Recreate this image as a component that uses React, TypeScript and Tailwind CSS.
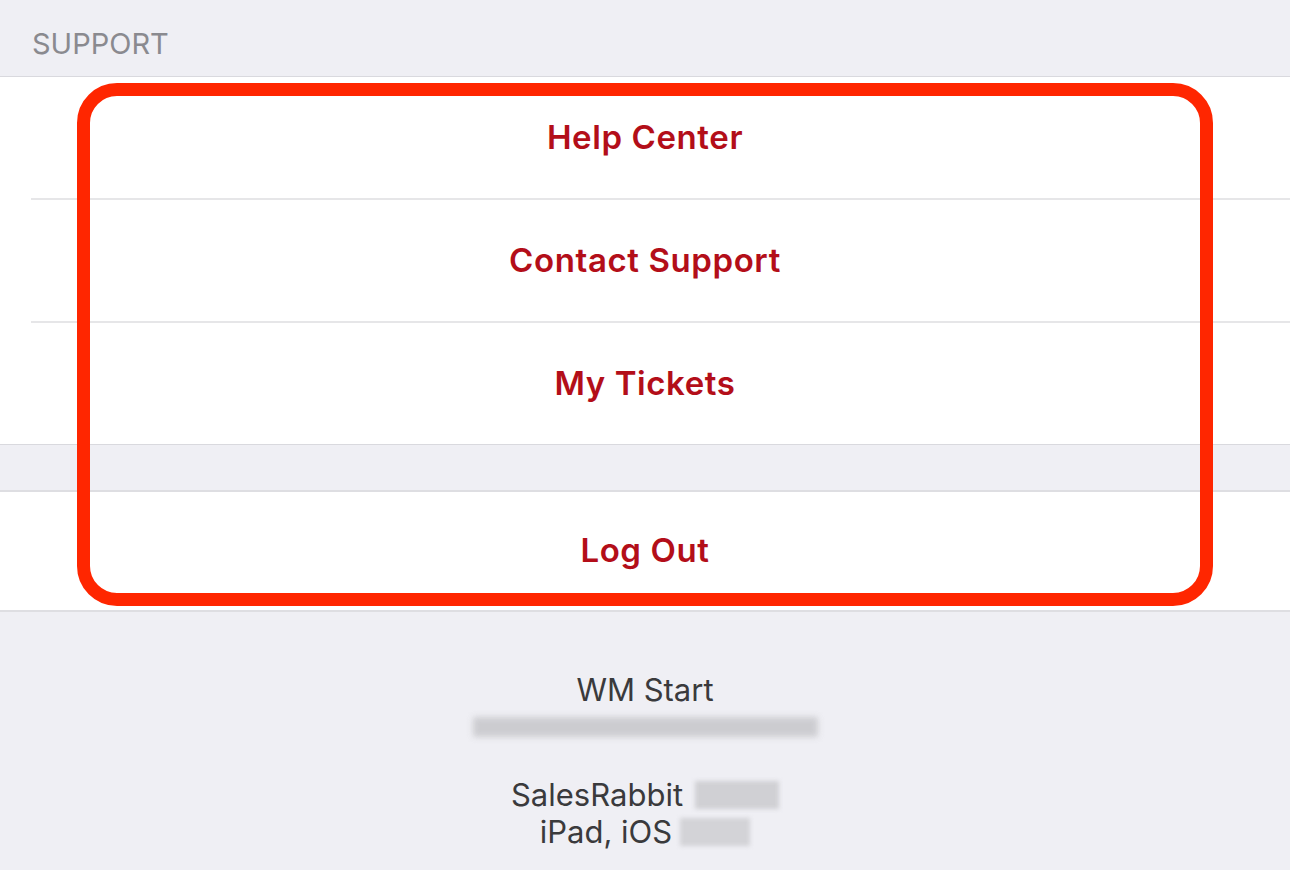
import React from "react";

export default function App() {
  const rowText = "text-[33px] font-semibold text-[#b30e19] tracking-[0.6px]";
  return (
    <div
      className="relative w-[1290px] h-[870px] overflow-hidden bg-[#efeff4]"
      style={{ fontFamily: "Inter, 'Noto Sans', sans-serif" }}
    >
      <div className="h-[76px] px-[32px] pt-[27px] text-[29px] leading-[34px] text-[#8a8a8f]">
        SUPPORT
      </div>
      <div className="border-t border-b border-[#d9d9de] bg-white">
        <div className="h-[121px] flex items-center justify-center">
          <span className={rowText}>Help Center</span>
        </div>
        <div className="ml-[31px] border-t-2 border-[#e6e6e8]" />
        <div className="h-[121px] flex items-center justify-center">
          <span className={rowText}>Contact Support</span>
        </div>
        <div className="ml-[31px] border-t-2 border-[#e6e6e8]" />
        <div className="h-[121px] flex items-center justify-center">
          <span className={rowText}>My Tickets</span>
        </div>
      </div>
      <div className="h-[45px]" />
      <div className="border-t-2 border-b-2 border-[#dedee2] bg-white h-[122px] flex items-center justify-center">
        <span className={rowText}>Log Out</span>
      </div>
      <div className="flex flex-col items-center pt-[60px] text-[31px] text-[#3a3a3c]">
        <div className="leading-[36px]">WM Start</div>
        <div className="mt-[4px] h-[30px] flex items-center">
          <div className="w-[345px] h-[20px] bg-[#c9c9cd] blur-[3px] opacity-90" />
        </div>
        <div className="mt-[34px] leading-[37px] flex items-center">
          <span>SalesRabbit</span>
          <span className="ml-[12px] w-[84px] h-[28px] bg-[#d0d0d4] blur-[2px]" />
        </div>
        <div className="leading-[37px] flex items-center">
          <span>iPad, iOS</span>
          <span className="ml-[8px] w-[70px] h-[28px] bg-[#d3d3d7] blur-[2px]" />
        </div>
      </div>
      <div className="absolute left-[77px] top-[83px] w-[1136px] h-[523px] border-[13px] border-[#ff2600] rounded-[40px]" />
    </div>
  );
}
